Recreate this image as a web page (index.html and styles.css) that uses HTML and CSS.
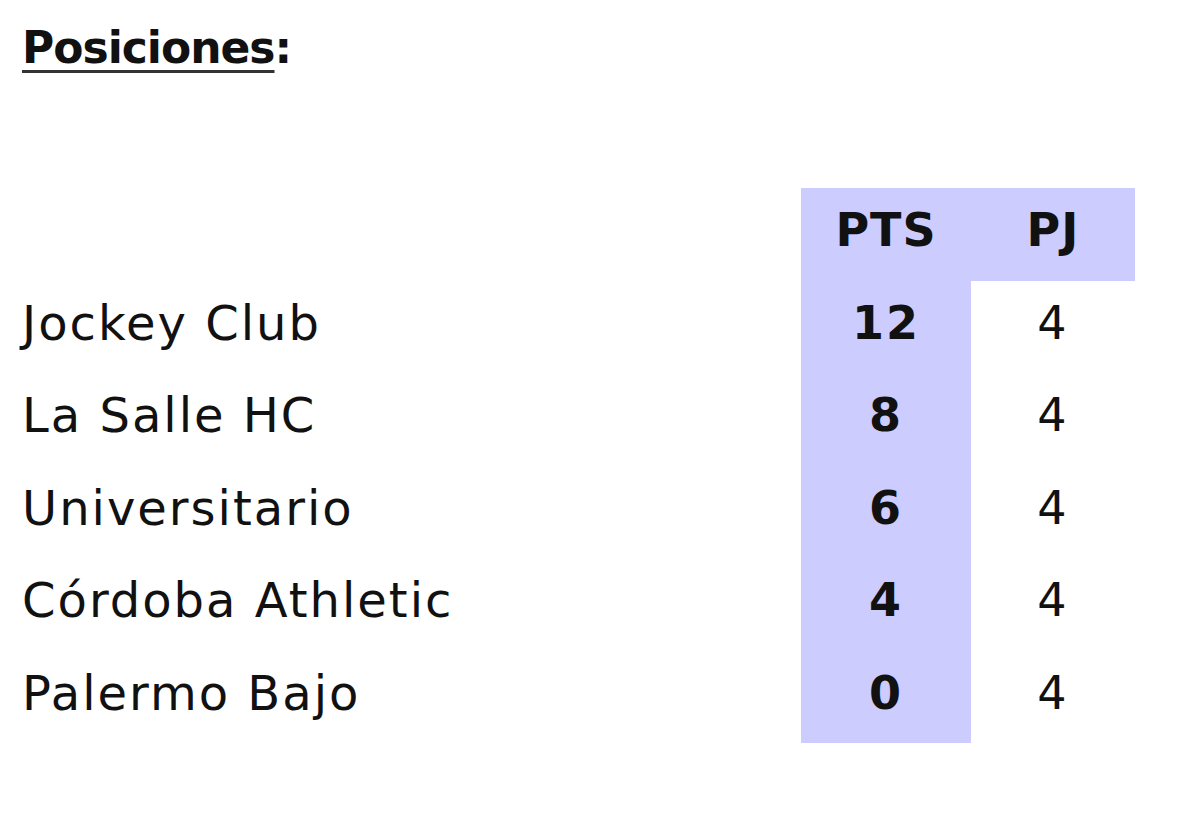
FILE: index.html
```html
<!DOCTYPE html>
<html lang="es">
<head>
<meta charset="utf-8">
<title>Posiciones</title>
<link rel="stylesheet" href="styles.css">
</head>
<body>
<div class="page">
  <h1 class="title"><span class="title-text">Posiciones</span>:</h1>
  <table class="standings">
    <colgroup>
      <col class="col-team">
      <col class="col-pts">
      <col class="col-pj">
    </colgroup>
    <thead>
      <tr>
        <th class="team-head"></th>
        <th class="num-head">PTS</th>
        <th class="num-head">PJ</th>
      </tr>
    </thead>
    <tbody>
      <tr><td class="team">Jockey Club</td><td class="pts">12</td><td class="pj">4</td></tr>
      <tr><td class="team">La Salle HC</td><td class="pts">8</td><td class="pj">4</td></tr>
      <tr><td class="team">Universitario</td><td class="pts">6</td><td class="pj">4</td></tr>
      <tr><td class="team">Córdoba Athletic</td><td class="pts">4</td><td class="pj">4</td></tr>
      <tr><td class="team">Palermo Bajo</td><td class="pts">0</td><td class="pj">4</td></tr>
    </tbody>
  </table>
</div>
</body>
</html>
```
FILE: styles.css
```css
html, body {
  margin: 0;
  padding: 0;
  background: #ffffff;
}

.page {
  padding: 18px 0 0 22px;
  font-family: "DejaVu Sans", Verdana, sans-serif;
  color: #111111;
}

.title {
  margin: 0;
  font-size: 44px;
  font-weight: bold;
  line-height: 60px;
  letter-spacing: -1px;
}

.title-text {
  text-decoration: underline;
  text-decoration-thickness: 3px;
  text-underline-offset: 7px;
  text-decoration-color: #333333;
}

.standings {
  margin-top: 110px;
  border-collapse: collapse;
  border-spacing: 0;
  table-layout: fixed;
  width: 1113px;
  font-size: 48px;
  letter-spacing: 2px;
}

.col-team { width: 779px; }
.col-pts { width: 170px; }
.col-pj { width: 164px; }

.standings th,
.standings td {
  height: 92.5px;
  padding: 0 0 8px 0;
  vertical-align: middle;
  box-sizing: border-box;
}

.team-head {
  background: transparent;
}

.num-head {
  background: #ccccff;
  font-weight: bold;
  text-align: center;
  font-size: 46px;
  letter-spacing: 1px;
}

.team {
  text-align: left;
  font-weight: normal;
}

.pts {
  background: #ccccff;
  font-weight: bold;
  text-align: center;
  font-size: 46px;
}

.pj {
  text-align: center;
  font-size: 46px;
}
```
